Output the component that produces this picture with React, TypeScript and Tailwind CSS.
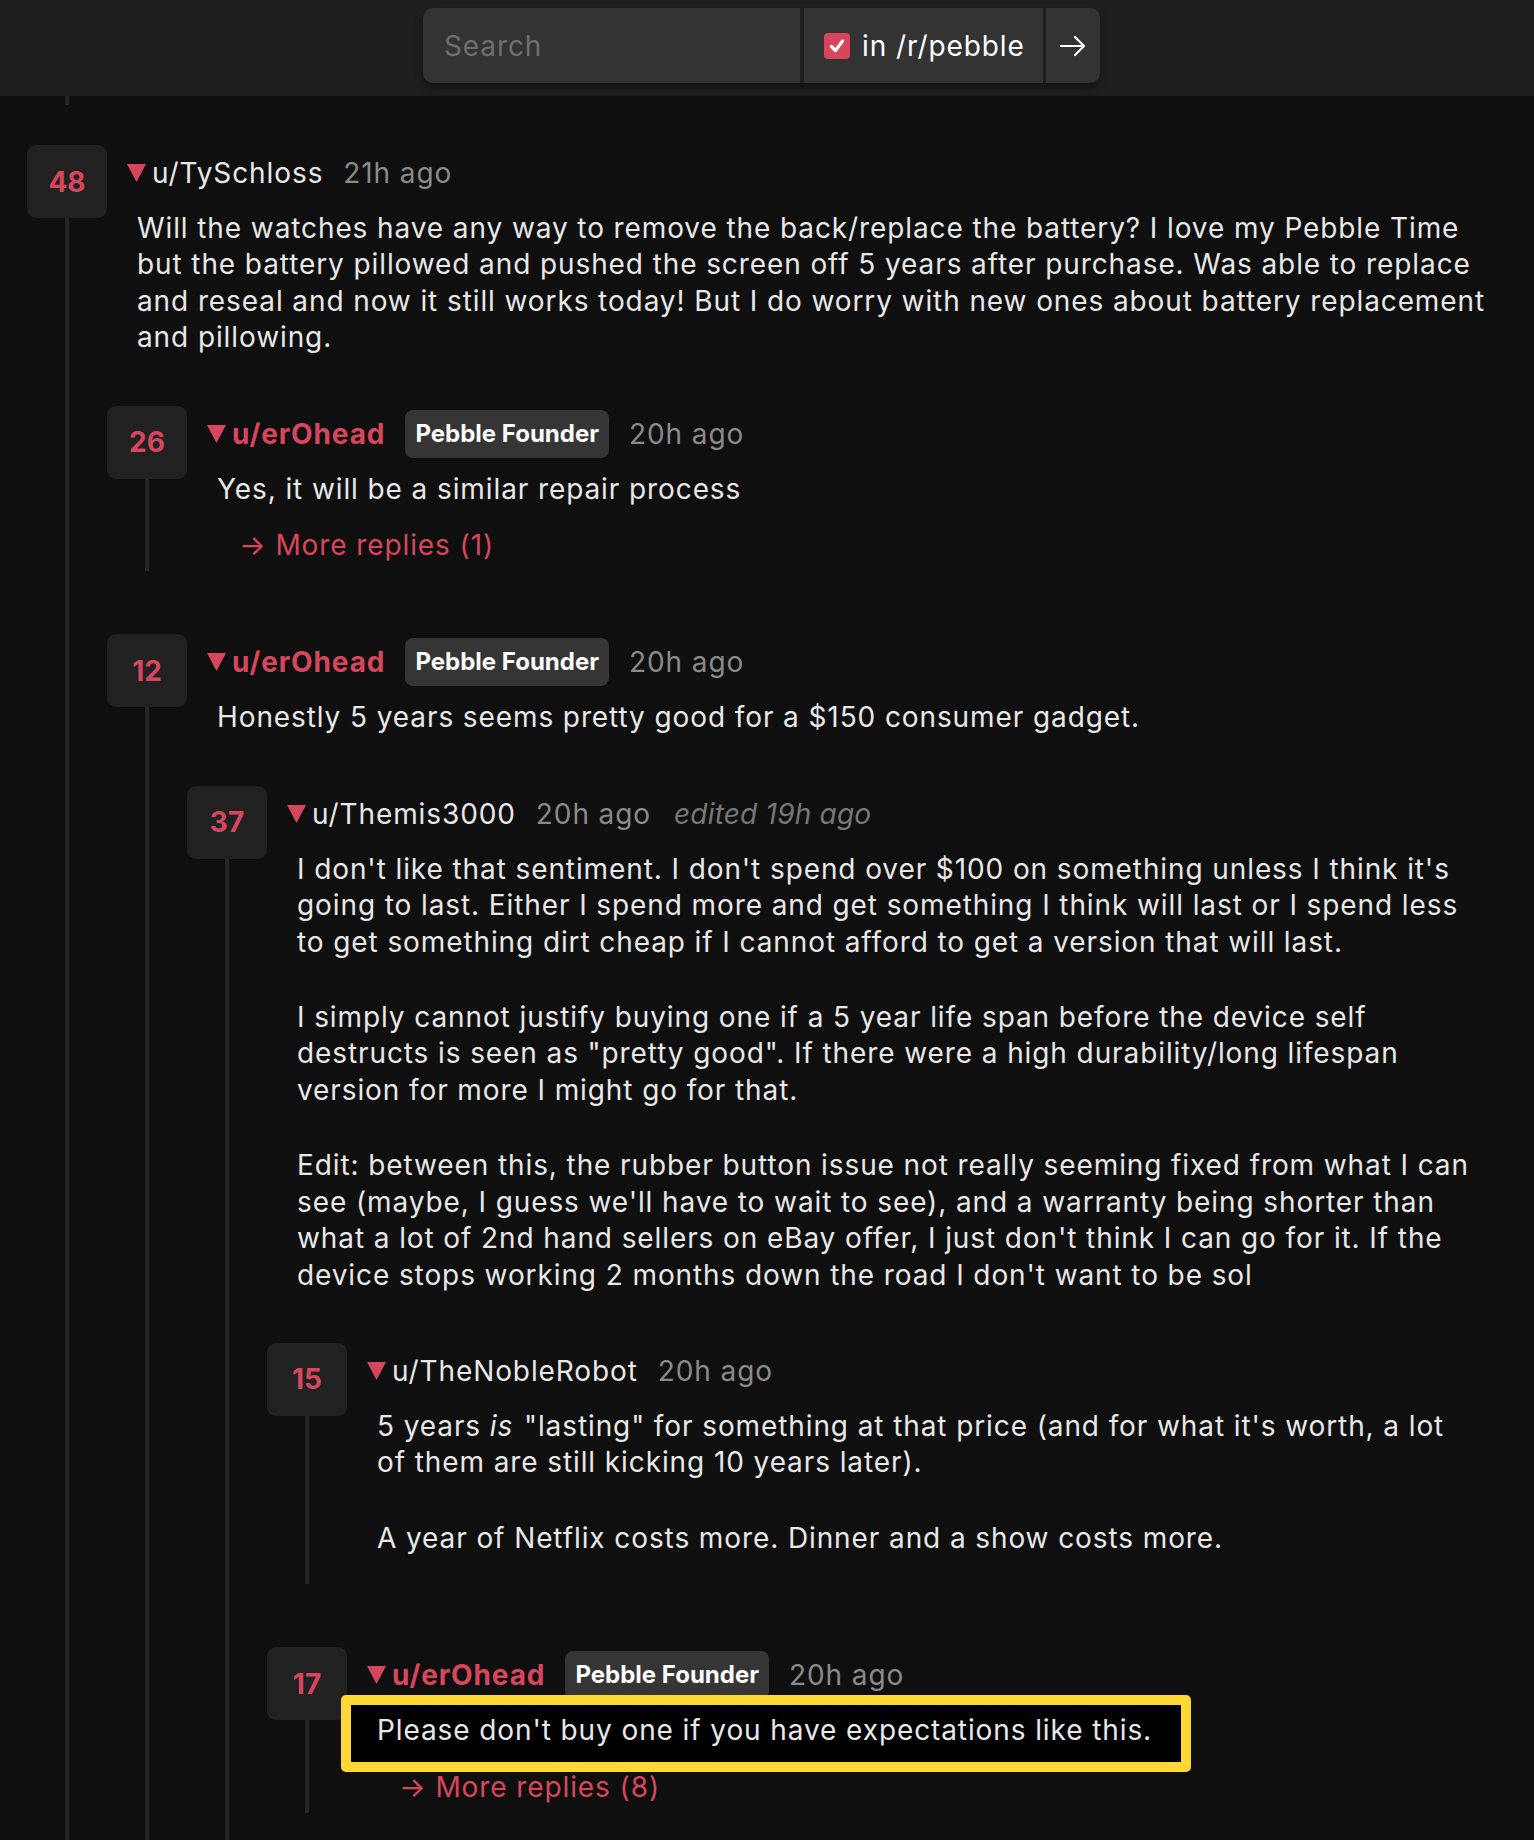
import React from "react";

type C = {
  score: number;
  user: string;
  founder?: boolean;
  time: string;
  edited?: string;
  body: React.ReactNode[];
  more?: number;
  highlight?: boolean;
  children?: C[];
  tail?: boolean;
};

function Tri() {
  return (
    <svg width="19" height="18" viewBox="0 0 19 18" className="shrink-0">
      <polygon points="0,0 19,0 9.5,18" fill="#d8465d" />
    </svg>
  );
}

function Comment({ c }: { c: C }) {
  return (
    <div className="flex">
      <div className="flex w-[80px] shrink-0 flex-col items-center">
        <div className="flex h-[73px] w-[80px] items-center justify-center rounded-[9px] bg-[#212121] text-[28px] font-bold text-[#d8465d]">
          {c.score}
        </div>
        <div className="w-[4px] flex-1 bg-[#262626]" />
      </div>
      <div className="min-w-0 flex-1 pb-[8px]">
        <div className="flex h-[56px] items-center gap-[20px] whitespace-nowrap pl-[20px] text-[28px] tracking-[0.9px]">
          <div className="flex items-center gap-[6px]">
            <Tri />
            <span className={c.founder ? "font-bold text-[#d8465d]" : "text-[#e8e8e8]"}>{c.user}</span>
          </div>
          {c.founder && (
            <span className="flex h-[48px] items-center rounded-[8px] bg-[#353535] px-[10px] text-[24px] font-bold tracking-normal text-white">
              Pebble Founder
            </span>
          )}
          <span className="text-[#8a8a8a]">{c.time}</span>
          {c.edited && <span className="ml-[3px] italic tracking-[0.2px] text-[#777777]">{c.edited}</span>}
        </div>
        <div className="mb-[20px] mt-[9px] flex flex-col gap-[39px] pl-[30px] text-[28px] leading-[36.4px] tracking-[0.9px] text-[#e8e8e8]">
          {c.highlight ? (
            <div className="relative self-start">
              <div className="absolute -bottom-[23px] -left-[36px] -right-[39px] -top-[17px] rounded-[5px] border-[10px] border-[#fdd835] bg-black" />
              <p className="relative">{c.body[0]}</p>
            </div>
          ) : (
            c.body.map((b, i) => <p key={i}>{b}</p>)
          )}
        </div>
        {c.more !== undefined && (
          <div className="relative pl-[52px] text-[28px] leading-[36.4px] tracking-[0.9px] text-[#d8465d]">→ More replies ({c.more})</div>
        )}
        {c.children && (
          <div className="mt-[50px] flex flex-col gap-[63px] pr-[13px]">
            {c.children.map((ch, i) => (
              <Comment key={i} c={ch} />
            ))}
            {c.tail && <div className="h-[20px]" />}
          </div>
        )}
      </div>
    </div>
  );
}

const thread: C = {
  score: 48,
  user: "u/TySchloss",
  time: "21h ago",
  body: [
    "Will the watches have any way to remove the back/replace the battery? I love my Pebble Time but the battery pillowed and pushed the screen off 5 years after purchase. Was able to replace and reseal and now it still works today! But I do worry with new ones about battery replacement and pillowing.",
  ],
  children: [
    {
      score: 26,
      user: "u/erOhead",
      founder: true,
      time: "20h ago",
      body: ["Yes, it will be a similar repair process"],
      more: 1,
    },
    {
      score: 12,
      user: "u/erOhead",
      founder: true,
      time: "20h ago",
      body: ["Honestly 5 years seems pretty good for a $150 consumer gadget."],
      children: [
        {
          score: 37,
          user: "u/Themis3000",
          time: "20h ago",
          edited: "edited 19h ago",
          body: [
            "I don't like that sentiment. I don't spend over $100 on something unless I think it's going to last. Either I spend more and get something I think will last or I spend less to get something dirt cheap if I cannot afford to get a version that will last.",
            "I simply cannot justify buying one if a 5 year life span before the device self destructs is seen as \"pretty good\". If there were a high durability/long lifespan version for more I might go for that.",
            "Edit: between this, the rubber button issue not really seeming fixed from what I can see (maybe, I guess we'll have to wait to see), and a warranty being shorter than what a lot of 2nd hand sellers on eBay offer, I just don't think I can go for it. If the device stops working 2 months down the road I don't want to be sol",
          ],
          tail: true,
          children: [
            {
              score: 15,
              user: "u/TheNobleRobot",
              time: "20h ago",
              body: [
                <>
                  5 years <em className="pr-[2px]">is</em> "lasting" for something at that price (and for what it's worth, a lot of them are still kicking 10 years later).
                </>,
                "A year of Netflix costs more. Dinner and a show costs more.",
              ],
            },
            {
              score: 17,
              user: "u/erOhead",
              founder: true,
              time: "20h ago",
              body: ["Please don't buy one if you have expectations like this."],
              highlight: true,
              more: 8,
            },
          ],
        },
      ],
    },
  ],
};

export default function App() {
  return (
    <div className="h-[1840px] overflow-hidden bg-[#0f0f0f] font-['Inter','Noto_Sans',sans-serif]">
      <div className="flex h-[96px] justify-center bg-[#1f1f1f] pr-[11px]">
        <div className="mt-[8px] flex h-[75px] gap-[4px] rounded-[10px] shadow-[0_4px_8px_rgba(0,0,0,0.45)]">
          <div className="flex w-[377px] items-center rounded-l-[10px] bg-[#333333] pl-[21px] text-[28px] tracking-[0.9px] text-[#6e6e6e]">
            Search
          </div>
          <div className="flex w-[239px] items-center gap-[12px] bg-[#333333] pl-[20px] text-[28px] tracking-[0.9px] text-white">
            <div className="flex h-[26px] w-[26px] items-center justify-center rounded-[4px] bg-[#d8465d]">
              <svg width="18" height="18" viewBox="0 0 18 18">
                <path d="M3.5 9.5 L7.5 13.5 L14.5 4" stroke="white" strokeWidth="3.2" fill="none" strokeLinecap="round" strokeLinejoin="round" />
              </svg>
            </div>
            <span>in /r/pebble</span>
          </div>
          <div className="ml-[-1px] flex w-[54px] items-center justify-center rounded-r-[10px] bg-[#333333]">
            <svg width="26" height="22" viewBox="0 0 26 22">
              <path d="M1 11 H24 M15 2 L24 11 L15 20" stroke="white" strokeWidth="2.2" fill="none" strokeLinecap="round" strokeLinejoin="round" />
            </svg>
          </div>
        </div>
      </div>
      <div className="px-[27px]">
        <div className="ml-[38px] h-[9px] w-[4px] bg-[#262626]" />
        <div className="mt-[40px]">
          <Comment c={thread} />
        </div>
      </div>
    </div>
  );
}
